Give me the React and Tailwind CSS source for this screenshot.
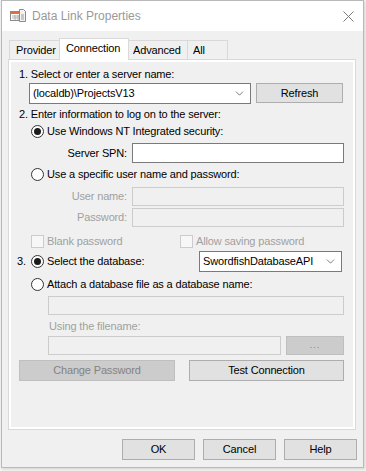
import { ChevronDown } from 'lucide-react'

function Radio({ checked, disabled }) {
  return (
    <span className={`w-[13px] h-[13px] rounded-full border bg-white flex items-center justify-center shrink-0 ${disabled ? 'border-[#bcbcbc]' : 'border-[#333333]'}`}>
      {checked && <span className="w-[7px] h-[7px] rounded-full bg-[#1a1a1a]" />}
    </span>
  )
}

function Check({ disabled }) {
  return <span className={`w-[13px] h-[13px] border shrink-0 ${disabled ? 'border-[#cccccc] bg-[#f7f7f7]' : 'border-[#333333] bg-white'}`} />
}

function Input({ className, disabled }) {
  return <div className={`border ${disabled ? 'border-[#cccccc] bg-[#f0f0f0]' : 'border-[#7a7a7a] bg-white'} ${className}`} />
}

function Btn({ children, className, disabled }) {
  return (
    <div className={`border flex items-center justify-center ${disabled ? 'border-[#bfbfbf] bg-[#cccccc] text-[#838383]' : 'border-[#adadad] bg-[#e1e1e1] text-black'} ${className}`}>
      {children}
    </div>
  )
}

function Combo({ value, className }) {
  return (
    <div className={`border border-[#7a7a7a] bg-white flex items-center pl-[3px] pr-[4px] ${className}`}>
      <span className="flex-1 truncate">{value}</span>
      <ChevronDown size={13} strokeWidth={1.3} className="text-[#444]" />
    </div>
  )
}

function TitleIcon() {
  return (
    <svg width="16" height="15" viewBox="0 0 16 15">
      <rect x="0.5" y="2.5" width="11" height="9" fill="#fff" stroke="#8a8a8a" />
      <rect x="1" y="3" width="10" height="2" fill="#e07040" />
      <path d="M2 7h8M2 9h8M5 6v5M8 6v5" stroke="#b0b0b0" strokeWidth="1" />
      <path d="M9.5 0.5h4l2 2v10h-6z" fill="#f4f4f4" stroke="#8a8a8a" />
      <path d="M11 6h3M11 8h3M11 10h3" stroke="#9a9a9a" />
    </svg>
  )
}

export default function App() {
  return (
    <div className="w-[366px] h-[471px] bg-[#f4f4f4] text-[11px] leading-[13px] tracking-[-0.15px] text-black" style={{ fontFamily: '"Liberation Sans", Arial, sans-serif' }}>
      <div className="ml-[1px] w-[363px] h-[468px] border border-[#b9b9b9] bg-[#f0f0f0] flex flex-col shadow-[1px_1px_3px_rgba(0,0,0,0.15)]">
        {/* title bar */}
        <div className="h-[30px] bg-white flex items-center pl-[8px] pr-[9px] shrink-0">
          <TitleIcon />
          <span className="ml-[6px] text-[12px] tracking-normal text-[#999999] mt-[1px]">Data Link Properties</span>
          <svg className="ml-auto" width="11" height="11" viewBox="0 0 11 11">
            <path d="M0.5 0.5l10 10M10.5 0.5l-10 10" stroke="#7a7a7a" strokeWidth="1" />
          </svg>
        </div>

        {/* tabs */}
        <div className="flex items-end pl-[7px] mt-[7px] h-[21px] relative z-10">
          <div className="h-[19px] px-[6px] border border-b-0 border-[#d9d9d9] bg-[#f0f0f0] flex items-center w-[51px]">Provider</div>
          <div className="-ml-[1px] px-[6px] border border-b-0 border-[#d9d9d9] bg-white flex items-start pt-[3px] w-[70px] -mb-[1px] h-[22px]">Connection</div>
          <div className="h-[19px] -ml-[1px] px-[4px] border border-b-0 border-[#d9d9d9] bg-[#f0f0f0] flex items-center w-[60px]">Advanced</div>
          <div className="h-[19px] -ml-[1px] px-[5px] border border-b-0 border-[#d9d9d9] bg-[#f0f0f0] flex items-center w-[41px]">All</div>
        </div>

        {/* tab page */}
        <div className="ml-[6px] w-[348px] h-[371px] border border-[#d9d9d9]">
          <div className="h-full border-2 border-white bg-[#f0f0f0] flex flex-col">
            <div className="pl-[8px] mt-[6px]">1. Select or enter a server name:</div>
            <div className="flex items-start mt-[2px] pl-[18px]">
              <Combo value="(localdb)\ProjectsV13" className="w-[222px] h-[21px]" />
              <Btn className="ml-[5px] w-[87px] h-[20px]">Refresh</Btn>
            </div>
            <div className="pl-[8px] mt-[4px]">2. Enter information to log on to the server:</div>
            <div className="flex items-center gap-[3px] pl-[20px] mt-[4px]">
              <Radio checked />
              <span>Use Windows NT Integrated security:</span>
            </div>
            <div className="flex items-center mt-[5px]">
              <span className="w-[117px] text-right pr-[1px]">Server SPN:</span>
              <Input className="ml-[4px] w-[212px] h-[20px]" />
            </div>
            <div className="flex items-center gap-[3px] pl-[20px] mt-[5px]">
              <Radio />
              <span>Use a specific user name and password:</span>
            </div>
            <div className="flex items-center mt-[6px]">
              <span className="w-[117px] text-right pr-[1px] text-[#a0a0a0]">User name:</span>
              <Input disabled className="ml-[4px] w-[212px] h-[19px]" />
            </div>
            <div className="flex items-center mt-[2px]">
              <span className="w-[117px] text-right pr-[1px] text-[#a0a0a0]">Password:</span>
              <Input disabled className="ml-[4px] w-[212px] h-[19px]" />
            </div>
            <div className="flex items-center mt-[8px] text-[#a0a0a0]">
              <div className="flex items-center gap-[3px] pl-[20px] w-[169px]">
                <Check disabled />
                <span>Blank password</span>
              </div>
              <div className="flex items-center gap-[3px]">
                <Check disabled />
                <span>Allow saving password</span>
              </div>
            </div>
            <div className="flex items-center mt-[3px] h-[21px]">
              <span className="pl-[6px] w-[20px]">3.</span>
              <Radio checked />
              <span className="ml-[3px] w-[152px]">Select the database:</span>
              <Combo value="SwordfishDatabaseAPI" className="w-[143px] h-[21px]" />
            </div>
            <div className="flex items-center gap-[3px] pl-[20px] mt-[6px]">
              <Radio />
              <span>Attach a database file as a database name:</span>
            </div>
            <div className="pl-[37px] mt-[5px]">
              <Input disabled className="w-[296px] h-[19px]" />
            </div>
            <div className="pl-[38px] mt-[5px] text-[#a0a0a0]">Using the filename:</div>
            <div className="flex pl-[37px] mt-[3px]">
              <Input disabled className="w-[233px] h-[19px]" />
              <Btn disabled className="ml-[5px] w-[58px] h-[19px]"><span className="text-[9px] tracking-[1px]">...</span></Btn>
            </div>
            <div className="flex pl-[8px] mt-[5px]">
              <Btn disabled className="w-[156px] h-[21px]">Change Password</Btn>
              <Btn className="ml-[14px] w-[155px] h-[21px]">Test Connection</Btn>
            </div>
          </div>
        </div>

        {/* bottom buttons */}
        <div className="flex justify-end gap-[8px] pr-[6px] mt-[9px]">
          <Btn className="w-[73px] h-[21px]">OK</Btn>
          <Btn className="w-[73px] h-[21px]">Cancel</Btn>
          <Btn className="w-[73px] h-[21px]">Help</Btn>
        </div>
      </div>
    </div>
  )
}
